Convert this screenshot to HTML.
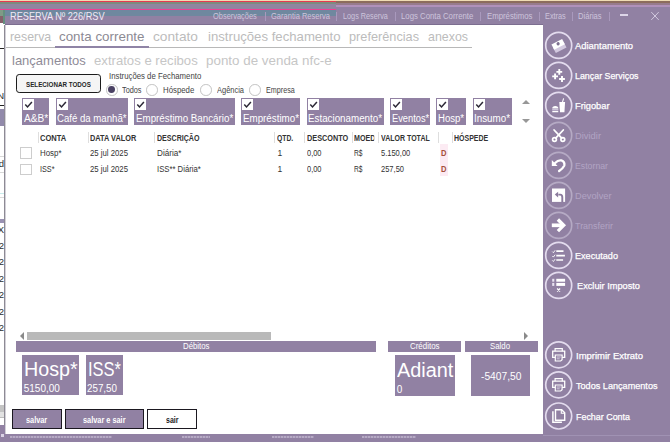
<!DOCTYPE html>
<html>
<head>
<meta charset="utf-8">
<title>Reserva</title>
<style>
*{box-sizing:border-box;margin:0;padding:0}
html,body{width:670px;height:442px;overflow:hidden;background:#fff}
body{position:relative;font-family:"Liberation Sans",sans-serif;color:#333}
.a{position:absolute}
.t{position:absolute;white-space:nowrap;transform-origin:0 0}
svg{position:absolute;overflow:visible}
</style>
</head>
<body>
<div class="a" style="left:0px;top:0px;width:670px;height:1px;background:#efdcb4;"></div>
<div class="a" style="left:0px;top:1px;width:336px;height:1px;background:#e63950;"></div>
<div class="a" style="left:336px;top:1px;width:334px;height:2px;background:#8c6c5c;"></div>
<div class="a" style="left:0px;top:2px;width:336px;height:2px;background:#7d8b7f;"></div>
<div class="a" style="left:0px;top:4px;width:336px;height:5px;background:#8f86a0;"></div>
<div class="a" style="left:336px;top:3px;width:334px;height:2px;background:#977b8c;"></div>
<div class="a" style="left:336px;top:5px;width:334px;height:2.4px;background:#b091ba;"></div>
<div class="a" style="left:336px;top:7px;width:334px;height:3px;background:#9181a3;"></div>
<div class="a" style="left:0px;top:9px;width:336px;height:1px;background:#ee3f93;"></div>
<div class="a" style="left:5px;top:10px;width:665px;height:14.5px;background:#9181a3;"></div>
<div class="a" style="left:0px;top:10px;width:336px;height:6px;background:#6f889f;"></div>
<div class="a" style="left:0px;top:10px;width:5px;height:6px;background:#7f9a86;"></div>
<div class="a" style="left:0px;top:16px;width:5px;height:7px;background:#85606a;"></div>
<div class="a" style="left:0px;top:22.5px;width:5px;height:2.5px;background:#fff;"></div>
<div class="a" style="left:3px;top:10px;width:1.5px;height:14px;background:#64907f;"></div>
<div class="a" style="left:542.6px;top:24px;width:127.4px;height:418px;background:#9181a3;"></div>
<div class="a" style="left:0px;top:434.3px;width:670px;height:7.7px;background:#9181a3;"></div>
<div class="a" style="left:0px;top:25px;width:6px;height:409.3px;background:#fff;"></div>
<div class="a" style="left:4px;top:25px;width:1px;height:409.3px;background:#8d8a94;"></div>
<div class="a" style="left:5px;top:25px;width:1px;height:409.3px;background:#d3d1d8;"></div>
<div class="a" style="left:5px;top:23.5px;width:538px;height:1px;background:#7c6e90;"></div>
<div class="a" style="left:0px;top:48px;width:4px;height:1px;background:#222;"></div>
<div class="a" style="left:265px;top:12px;width:1px;height:9px;background:#a999bd;"></div>
<div class="a" style="left:336px;top:12px;width:1px;height:9px;background:#a999bd;"></div>
<div class="a" style="left:394.5px;top:12px;width:1px;height:9px;background:#a999bd;"></div>
<div class="a" style="left:480px;top:12px;width:1px;height:9px;background:#a999bd;"></div>
<div class="a" style="left:538.5px;top:12px;width:1px;height:9px;background:#a999bd;"></div>
<div class="a" style="left:572px;top:12px;width:1px;height:9px;background:#a999bd;"></div>
<div class="a" style="left:608.5px;top:12px;width:1px;height:9px;background:#a999bd;"></div>
<div class="a" style="left:620.4px;top:14.4px;width:7.2px;height:1.2px;background:#ddd5e8;"></div>
<svg style="left:650.6px;top:11.5px" width="8" height="8" viewBox="0 0 8 8"><path d="M0.3 0.1L7.7 7.9M7.7 0.1L0.3 7.9" stroke="#d9d1e5" stroke-width="0.9" fill="none"/></svg>
<div class="a" style="left:6px;top:47px;width:466px;height:1px;background:#b8b8b8;"></div>
<div class="a" style="left:55px;top:46px;width:94px;height:2px;background:#8f84a6;"></div>
<div class="a" style="left:15.9px;top:73.9px;width:85.4px;height:19.2px;border:1.9px solid #1c1c1c;border-radius:3.2px;background:#f5f5f5"></div>
<div class="a" style="left:106.0px;top:84.1px;width:11.5px;height:11.5px;border-radius:50%;border:1px solid #c2c2c2;background:#fff"></div>
<div class="a" style="left:108.35px;top:86.45px;width:6.8px;height:6.8px;border-radius:50%;background:#4b4264"></div>
<div class="a" style="left:146.25px;top:84.1px;width:11.5px;height:11.5px;border-radius:50%;border:1px solid #c2c2c2;background:#fff"></div>
<div class="a" style="left:200.25px;top:84.1px;width:11.5px;height:11.5px;border-radius:50%;border:1px solid #c2c2c2;background:#fff"></div>
<div class="a" style="left:249.0px;top:84.1px;width:11.5px;height:11.5px;border-radius:50%;border:1px solid #c2c2c2;background:#fff"></div>
<div class="a" style="left:22px;top:98px;width:27.200000000000003px;height:26.6px;background:#9181a3;"></div>
<div class="a" style="left:23px;top:99.25px;width:11px;height:11px;background:#fff;"></div>
<svg style="left:23px;top:99.25px" width="11" height="11" viewBox="0 0 11 11"><path d="M2.3 5.6L4.5 7.9L8.9 2.9" stroke="#2b2735" stroke-width="1.5" fill="none"/></svg>
<div class="a" style="left:55.5px;top:98px;width:72.4px;height:26.6px;background:#9181a3;"></div>
<div class="a" style="left:56.5px;top:99.25px;width:11px;height:11px;background:#fff;"></div>
<svg style="left:56.5px;top:99.25px" width="11" height="11" viewBox="0 0 11 11"><path d="M2.3 5.6L4.5 7.9L8.9 2.9" stroke="#2b2735" stroke-width="1.5" fill="none"/></svg>
<div class="a" style="left:134.2px;top:98px;width:100.70000000000002px;height:26.6px;background:#9181a3;"></div>
<div class="a" style="left:135.2px;top:99.25px;width:11px;height:11px;background:#fff;"></div>
<svg style="left:135.2px;top:99.25px" width="11" height="11" viewBox="0 0 11 11"><path d="M2.3 5.6L4.5 7.9L8.9 2.9" stroke="#2b2735" stroke-width="1.5" fill="none"/></svg>
<div class="a" style="left:241.2px;top:98px;width:58.80000000000001px;height:26.6px;background:#9181a3;"></div>
<div class="a" style="left:242.2px;top:99.25px;width:11px;height:11px;background:#fff;"></div>
<svg style="left:242.2px;top:99.25px" width="11" height="11" viewBox="0 0 11 11"><path d="M2.3 5.6L4.5 7.9L8.9 2.9" stroke="#2b2735" stroke-width="1.5" fill="none"/></svg>
<div class="a" style="left:306.6px;top:98px;width:77.39999999999998px;height:26.6px;background:#9181a3;"></div>
<div class="a" style="left:307.6px;top:99.25px;width:11px;height:11px;background:#fff;"></div>
<svg style="left:307.6px;top:99.25px" width="11" height="11" viewBox="0 0 11 11"><path d="M2.3 5.6L4.5 7.9L8.9 2.9" stroke="#2b2735" stroke-width="1.5" fill="none"/></svg>
<div class="a" style="left:390px;top:98px;width:40.30000000000001px;height:26.6px;background:#9181a3;"></div>
<div class="a" style="left:391px;top:99.25px;width:11px;height:11px;background:#fff;"></div>
<svg style="left:391px;top:99.25px" width="11" height="11" viewBox="0 0 11 11"><path d="M2.3 5.6L4.5 7.9L8.9 2.9" stroke="#2b2735" stroke-width="1.5" fill="none"/></svg>
<div class="a" style="left:436.4px;top:98px;width:29.600000000000023px;height:26.6px;background:#9181a3;"></div>
<div class="a" style="left:437.4px;top:99.25px;width:11px;height:11px;background:#fff;"></div>
<svg style="left:437.4px;top:99.25px" width="11" height="11" viewBox="0 0 11 11"><path d="M2.3 5.6L4.5 7.9L8.9 2.9" stroke="#2b2735" stroke-width="1.5" fill="none"/></svg>
<div class="a" style="left:472.7px;top:98px;width:39.30000000000001px;height:26.6px;background:#9181a3;"></div>
<div class="a" style="left:473.7px;top:99.25px;width:11px;height:11px;background:#fff;"></div>
<svg style="left:473.7px;top:99.25px" width="11" height="11" viewBox="0 0 11 11"><path d="M2.3 5.6L4.5 7.9L8.9 2.9" stroke="#2b2735" stroke-width="1.5" fill="none"/></svg>
<svg style="left:522px;top:100px" width="8" height="4" viewBox="0 0 8 4"><path d="M0 4L4 0L8 4Z" fill="#979797"/></svg>
<svg style="left:522px;top:118.5px" width="8" height="4" viewBox="0 0 8 4"><path d="M0 0L4 4L8 0Z" fill="#979797"/></svg>
<div class="a" style="left:38px;top:131.5px;width:1px;height:11.5px;background:#dedede;"></div>
<div class="a" style="left:87.5px;top:131.5px;width:1px;height:11.5px;background:#dedede;"></div>
<div class="a" style="left:153.75px;top:131.5px;width:1px;height:11.5px;background:#dedede;"></div>
<div class="a" style="left:274.25px;top:131.5px;width:1px;height:11.5px;background:#dedede;"></div>
<div class="a" style="left:304.25px;top:131.5px;width:1px;height:11.5px;background:#dedede;"></div>
<div class="a" style="left:352.25px;top:131.5px;width:1px;height:11.5px;background:#dedede;"></div>
<div class="a" style="left:378px;top:131.5px;width:1px;height:11.5px;background:#dedede;"></div>
<div class="a" style="left:438px;top:131.5px;width:1px;height:11.5px;background:#dedede;"></div>
<div class="a" style="left:451.5px;top:131.5px;width:1px;height:11.5px;background:#dedede;"></div>
<div class="a" style="left:439.6px;top:143.6px;width:8.6px;height:32.2px;background:#fcebf3;"></div>
<div class="a" style="left:20px;top:147px;width:12px;height:11.75px;border:1px solid #cdcdcd;background:#fff"></div>
<div class="a" style="left:20px;top:163.5px;width:12px;height:11.75px;border:1px solid #cdcdcd;background:#fff"></div>
<div class="a" style="left:27px;top:332px;width:244px;height:7.5px;background:#b9b9b9;"></div>
<svg style="left:20px;top:332px" width="4" height="8" viewBox="0 0 4 8"><path d="M4 0L0 4L4 8Z" fill="#8a8a8a"/></svg>
<svg style="left:524px;top:332px" width="4" height="8" viewBox="0 0 4 8"><path d="M0 0L4 4L0 8Z" fill="#8a8a8a"/></svg>
<div class="a" style="left:16.25px;top:341px;width:359.75px;height:11px;background:#9181a3;"></div>
<div class="a" style="left:388.3px;top:341px;width:73.1px;height:11px;background:#9181a3;"></div>
<div class="a" style="left:465.25px;top:341px;width:72.75px;height:11px;background:#9181a3;"></div>
<div class="a" style="left:22px;top:354.8px;width:56.75px;height:40.2px;background:#9181a3;"></div>
<div class="a" style="left:85.5px;top:354.8px;width:37px;height:40.2px;background:#9181a3;"></div>
<div class="a" style="left:395.2px;top:355.4px;width:59.9px;height:41px;background:#9181a3;"></div>
<div class="a" style="left:470.5px;top:355.4px;width:59.8px;height:41px;background:#9181a3;"></div>
<div class="a" style="left:11.75px;top:409.25px;width:50.25px;height:19.5px;border:1.7px solid #1b1820;background:#9181a3"></div>
<div class="a" style="left:65px;top:409.25px;width:78.75px;height:19.5px;border:1.7px solid #1b1820;background:#9181a3"></div>
<div class="a" style="left:147.25px;top:409.25px;width:50.0px;height:19.5px;border:1.7px solid #1b1820;background:#fff"></div>
<div class="a" style="left:543px;top:434.8px;width:127px;height:1px;background:#a092b3;"></div>
<div class="a" style="left:10px;top:436px;width:102px;height:1.5px;background:repeating-linear-gradient(90deg,#e4dced 0 2px,#b5a8c6 2px 3px);opacity:.45"></div>
<div class="a" style="left:182px;top:436px;width:28px;height:1.5px;background:repeating-linear-gradient(90deg,#e4dced 0 2px,#b5a8c6 2px 3px);opacity:.45"></div>
<div class="a" style="left:272px;top:436px;width:42px;height:1.5px;background:repeating-linear-gradient(90deg,#e4dced 0 2px,#b5a8c6 2px 3px);opacity:.45"></div>
<div class="a" style="left:362px;top:436px;width:54px;height:1.5px;background:repeating-linear-gradient(90deg,#e4dced 0 2px,#b5a8c6 2px 3px);opacity:.45"></div>
<svg style="left:0;top:0" width="670" height="442"><circle cx="558.7" cy="45.4" r="13.0" fill="none" stroke="#e3dbee" stroke-width="1.65" opacity="1.0"/></svg>
<svg style="left:0;top:0" width="670" height="442"><circle cx="558.7" cy="75.4" r="13.0" fill="none" stroke="#e3dbee" stroke-width="1.65" opacity="1.0"/></svg>
<svg style="left:0;top:0" width="670" height="442"><circle cx="558.7" cy="105.4" r="13.0" fill="none" stroke="#e3dbee" stroke-width="1.65" opacity="1.0"/></svg>
<svg style="left:0;top:0" width="670" height="442"><circle cx="558.7" cy="135.4" r="13.0" fill="none" stroke="#e3dbee" stroke-width="1.65" opacity="0.45"/></svg>
<svg style="left:0;top:0" width="670" height="442"><circle cx="558.7" cy="165.4" r="13.0" fill="none" stroke="#e3dbee" stroke-width="1.65" opacity="0.45"/></svg>
<svg style="left:0;top:0" width="670" height="442"><circle cx="558.7" cy="195.4" r="13.0" fill="none" stroke="#e3dbee" stroke-width="1.65" opacity="0.45"/></svg>
<svg style="left:0;top:0" width="670" height="442"><circle cx="558.7" cy="225.4" r="13.0" fill="none" stroke="#e3dbee" stroke-width="1.65" opacity="0.45"/></svg>
<svg style="left:0;top:0" width="670" height="442"><circle cx="558.7" cy="255.4" r="13.0" fill="none" stroke="#e3dbee" stroke-width="1.65" opacity="1.0"/></svg>
<svg style="left:0;top:0" width="670" height="442"><circle cx="558.7" cy="285.4" r="13.0" fill="none" stroke="#e3dbee" stroke-width="1.65" opacity="1.0"/></svg>
<svg style="left:0;top:0" width="670" height="442"><circle cx="558.7" cy="354.8" r="13.0" fill="none" stroke="#e3dbee" stroke-width="1.65" opacity="1.0"/></svg>
<svg style="left:0;top:0" width="670" height="442"><circle cx="558.7" cy="384.8" r="13.0" fill="none" stroke="#e3dbee" stroke-width="1.65" opacity="1.0"/></svg>
<svg style="left:0;top:0" width="670" height="442"><circle cx="558.7" cy="416.0" r="13.0" fill="none" stroke="#e3dbee" stroke-width="1.65" opacity="1.0"/></svg>
<svg style="left:0;top:0" width="670" height="442"><g transform="translate(558.7 45.4)" opacity="1.0"><g transform="rotate(-27)"><rect x="-6" y="-0.8" width="12" height="6.2" fill="#d3c9e0"/><rect x="-6" y="-4.2" width="12" height="6" fill="#fff"/><circle cx="0.2" cy="-1.7" r="1.6" fill="#7d7090"/></g></g></svg>
<svg style="left:0;top:0" width="670" height="442"><g transform="translate(558.7 75.4)" opacity="1.0"><path d="M-2.3 -3.5H3.5M0.6 -6.4V-0.6000000000000001" stroke="#fff" stroke-width="1.9" fill="none"/><path d="M-6.5 1.0H-0.7000000000000002M-3.6 -1.9V3.9" stroke="#fff" stroke-width="1.9" fill="none"/><path d="M0.3999999999999999 3.6H6.199999999999999M3.3 0.7000000000000002V6.5" stroke="#fff" stroke-width="1.9" fill="none"/></g></svg>
<svg style="left:0;top:0" width="670" height="442"><g transform="translate(558.7 105.4)" opacity="1.0"><path d="M-6.5 3.2Q-6.5 0.6 -3.4 0.6Q-0.3 0.6 -0.3 3.2Z" fill="#fff"/><rect x="-6.5" y="3.8" width="6.2" height="1.2" fill="#ddd5e8"/><rect x="-6.5" y="5.5" width="6.2" height="1.3" rx="0.5" fill="#fff"/><path d="M0.6 -3.4H6.4L5.7 6.8H1.3Z" fill="#fff"/><path d="M3.8 -3.2L4.9 -7" stroke="#fff" stroke-width="1.1" fill="none"/></g></svg>
<svg style="left:0;top:0" width="670" height="442"><g transform="translate(558.7 135.4)" opacity="1.0"><path d="M-4.6 -5.4L3.0 2.8M4.6 -5.4L-3.0 2.8" stroke="#fff" stroke-width="1.8" fill="none" stroke-linecap="round"/><circle cx="-4.2" cy="4.1" r="1.9" fill="none" stroke="#fff" stroke-width="1.7"/><circle cx="4.1" cy="4.1" r="1.9" fill="none" stroke="#fff" stroke-width="1.7"/></g></svg>
<svg style="left:0;top:0" width="670" height="442"><g transform="translate(558.7 165.4)" opacity="1.0"><path d="M-6.9 -5.4V0.6H-1.1Z" fill="#fff"/><path d="M-3.6 -2.4Q-0.6 -5.6 2.6 -5.0Q6.4 -3.8 5.6 0.2Q4.6 2.6 0.4 5.6" stroke="#fff" stroke-width="2.3" fill="none" stroke-linecap="round"/></g></svg>
<svg style="left:0;top:0" width="670" height="442"><g transform="translate(558.7 195.4)" opacity="1.0"><rect x="-6.7" y="-6.9" width="13.1" height="13.4" fill="#fff"/><path d="M-0.4 -0.8H1.6Q3.6 -0.8 3.6 2V6.5" stroke="#8b7b9d" stroke-width="1.9" fill="none"/><path d="M-3.9 -0.8L-0.6 -3.6V2Z" fill="#8b7b9d"/></g></svg>
<svg style="left:0;top:0" width="670" height="442"><g transform="translate(558.7 225.4)" opacity="1.0"><path d="M-6.9 -0.1H4.2" stroke="#fff" stroke-width="3.7" fill="none"/><path d="M-0.8 -5.9L5.0 -0.1L-0.8 5.7" stroke="#fff" stroke-width="3.3" fill="none" stroke-linejoin="miter"/></g></svg>
<svg style="left:0;top:0" width="670" height="442"><g transform="translate(558.7 255.4)" opacity="1.0"><path d="M-2.4 -4.2H4.8M-2.4 0.2H6.2M-2.4 4.6H4.4" stroke="#fff" stroke-width="1.7" fill="none"/><path d="M-6.4 -3.8L-5.3 -2.6999999999999997L-3.6 -5.1" stroke="#fff" stroke-width="0.9" fill="none"/><path d="M-6.4 0.6L-5.3 1.7000000000000002L-3.6 -0.7000000000000001" stroke="#fff" stroke-width="0.9" fill="none"/><path d="M-6.4 5.0L-5.3 6.1L-3.6 3.7" stroke="#fff" stroke-width="0.9" fill="none"/></g></svg>
<svg style="left:0;top:0" width="670" height="442"><g transform="translate(558.7 285.4)" opacity="1.0"><rect x="-6.5" y="-6.6" width="2.1" height="2.9" fill="#e9e3f1"/><rect x="-2.4" y="-6.6" width="8.8" height="2.9" fill="#fff"/><rect x="-6.5" y="-2.5" width="2.1" height="3" fill="#e9e3f1"/><rect x="-2.4" y="-2.5" width="8.8" height="3" fill="#fff"/><path d="M-1.6 3.1L1.4 6.1M1.4 3.1L-1.6 6.1" stroke="#fff" stroke-width="1.2" fill="none"/></g></svg>
<svg style="left:0;top:0" width="670" height="442"><g transform="translate(558.7 354.8)" opacity="1.0"><path d="M-3.6 -3.6V-6.2H3.6V-3.6" stroke="#fff" stroke-width="1.2" fill="none"/><path d="M-3.4 2.6H-6V-3.6H6V2.6H3.4" stroke="#fff" stroke-width="1.3" fill="none"/><path d="M-3.4 0.2H3.4V5L2 6.2H-3.4Z" stroke="#fff" stroke-width="1.2" fill="none"/><path d="M-2 2.2H2M-2 4H1" stroke="#e6dff0" stroke-width="0.8" fill="none"/></g></svg>
<svg style="left:0;top:0" width="670" height="442"><g transform="translate(558.7 384.8)" opacity="1.0"><path d="M-3.6 -3.6V-6.2H3.6V-3.6" stroke="#fff" stroke-width="1.2" fill="none"/><path d="M-3.4 2.6H-6V-3.6H6V2.6H3.4" stroke="#fff" stroke-width="1.3" fill="none"/><path d="M-3.4 0.2H3.4V5L2 6.2H-3.4Z" stroke="#fff" stroke-width="1.2" fill="none"/><path d="M-2 2.2H2M-2 4H1" stroke="#e6dff0" stroke-width="0.8" fill="none"/></g></svg>
<svg style="left:0;top:0" width="670" height="442"><g transform="translate(558.7 416.0)" opacity="1.0"><path d="M-3.2 -6.2H3L6 -3.2V4.2H-3.2Z" stroke="#fff" stroke-width="1.4" fill="none" stroke-linejoin="miter"/><path d="M2.6 -6V-2.8H5.8" stroke="#fff" stroke-width="1.1" fill="none"/><path d="M-5.8 -4.8V6.2H3.2" stroke="#fff" stroke-width="1.5" fill="none"/></g></svg>
<div class="a" style="left:0px;top:105px;width:4px;height:1px;background:#222;"></div>
<div class="a" style="left:0px;top:109px;width:4px;height:17px;background:#9189aa;"></div>
<div class="a" style="left:0px;top:156px;width:4px;height:1px;background:#d8d8d8;"></div>
<div class="a" style="left:0px;top:172px;width:4px;height:1px;background:#d8d8d8;"></div>
<div class="a" style="left:0px;top:193px;width:4px;height:1px;background:#c9ecec;"></div>
<div class="a" style="left:0px;top:197px;width:4px;height:1px;background:#d9d9d9;"></div>
<div class="a" style="left:0px;top:219px;width:4px;height:4px;background:#9a92b3;"></div>
<div class="a" style="left:0px;top:405px;width:4px;height:7px;background:#c4c4c4;"></div>
<div class="a" style="left:0px;top:412px;width:4px;height:5px;background:#e2e2e2;"></div>
<div class="a" style="left:0px;top:417px;width:4px;height:1px;background:#bdbdbd;"></div>
<div class="a" style="left:0px;top:425px;width:5px;height:10px;background:#9181a3;"></div>
<div class="a" style="left:0.5px;top:433.5px;width:3px;height:3.5px;background:#d9d2e4;"></div>
<div class="a" style="left:0;top:91px;width:4px;height:10px;overflow:hidden"><div class="a" style="right:0;top:0;font-size:9.5px;line-height:10px;color:#2e2e2e;white-space:nowrap">/N</div></div>
<div class="a" style="left:0;top:159px;width:4px;height:10px;overflow:hidden"><div class="a" style="right:0;top:0;font-size:9.5px;line-height:10px;color:#2e2e2e;white-space:nowrap">ad</div></div>
<div class="a" style="left:0;top:225px;width:4px;height:10px;overflow:hidden"><div class="a" style="right:0;top:0;font-size:9.5px;line-height:10px;color:#2e2e2e;white-space:nowrap">X</div></div>
<div class="a" style="left:0;top:240.5px;width:4px;height:10px;overflow:hidden"><div class="a" style="right:0;top:0;font-size:9.5px;line-height:10px;color:#2e2e2e;white-space:nowrap">2</div></div>
<div class="a" style="left:0;top:257px;width:4px;height:10px;overflow:hidden"><div class="a" style="right:0;top:0;font-size:9.5px;line-height:10px;color:#2e2e2e;white-space:nowrap">2</div></div>
<div class="a" style="left:0;top:273.5px;width:4px;height:10px;overflow:hidden"><div class="a" style="right:0;top:0;font-size:9.5px;line-height:10px;color:#2e2e2e;white-space:nowrap">2</div></div>
<div class="a" style="left:0;top:290px;width:4px;height:10px;overflow:hidden"><div class="a" style="right:0;top:0;font-size:9.5px;line-height:10px;color:#2e2e2e;white-space:nowrap">2</div></div>
<div class="a" style="left:0;top:306.5px;width:4px;height:10px;overflow:hidden"><div class="a" style="right:0;top:0;font-size:9.5px;line-height:10px;color:#2e2e2e;white-space:nowrap">2</div></div>
<div class="a" style="left:0;top:323px;width:4px;height:10px;overflow:hidden"><div class="a" style="right:0;top:0;font-size:9.5px;line-height:10px;color:#2e2e2e;white-space:nowrap">2</div></div>
<div class="t" style="left:10.20px;top:11.19px;font-size:11px;line-height:11px;color:#efe9f6;transform:scaleX(0.8367);">RESERVA Nº 226/RSV</div>
<div class="t" style="left:213.40px;top:11.78px;font-size:9px;line-height:9px;color:#cdc4dc;transform:scaleX(0.8259);">Observações</div>
<div class="t" style="left:270.80px;top:11.78px;font-size:9px;line-height:9px;color:#cdc4dc;transform:scaleX(0.8349);">Garantia Reserva</div>
<div class="t" style="left:343.10px;top:11.78px;font-size:9px;line-height:9px;color:#cdc4dc;transform:scaleX(0.8086);">Logs Reserva</div>
<div class="t" style="left:401.00px;top:11.78px;font-size:9px;line-height:9px;color:#cdc4dc;transform:scaleX(0.8652);">Logs Conta Corrente</div>
<div class="t" style="left:486.60px;top:11.78px;font-size:9px;line-height:9px;color:#cdc4dc;transform:scaleX(0.8645);">Empréstimos</div>
<div class="t" style="left:544.70px;top:11.78px;font-size:9px;line-height:9px;color:#cdc4dc;transform:scaleX(0.8152);">Extras</div>
<div class="t" style="left:578.40px;top:11.78px;font-size:9px;line-height:9px;color:#cdc4dc;transform:scaleX(0.8424);">Diárias</div>
<div class="t" style="left:9.50px;top:30.07px;font-size:13.5px;line-height:13.5px;color:#bcbcbc;transform:scaleX(0.9163);">reserva</div>
<div class="t" style="left:59.00px;top:30.07px;font-size:13.5px;line-height:13.5px;color:#8c8a93;transform:scaleX(0.9906);">conta corrente</div>
<div class="t" style="left:153.00px;top:30.07px;font-size:13.5px;line-height:13.5px;color:#bcbcbc;transform:scaleX(1.0159);">contato</div>
<div class="t" style="left:207.50px;top:30.07px;font-size:13.5px;line-height:13.5px;color:#bcbcbc;transform:scaleX(0.9755);">instruções fechamento</div>
<div class="t" style="left:349.00px;top:30.07px;font-size:13.5px;line-height:13.5px;color:#bcbcbc;transform:scaleX(0.9422);">preferências</div>
<div class="t" style="left:428.00px;top:30.07px;font-size:13.5px;line-height:13.5px;color:#bcbcbc;transform:scaleX(0.9186);">anexos</div>
<div class="t" style="left:11.75px;top:54.07px;font-size:13.5px;line-height:13.5px;color:#8f8c98;transform:scaleX(0.9635);">lançamentos</div>
<div class="t" style="left:93.75px;top:54.07px;font-size:13.5px;line-height:13.5px;color:#c6c6c6;transform:scaleX(0.9736);">extratos e recibos</div>
<div class="t" style="left:206.00px;top:54.07px;font-size:13.5px;line-height:13.5px;color:#c6c6c6;transform:scaleX(0.9913);">ponto de venda nfc-e</div>
<div class="t" style="left:26.40px;top:80.97px;font-size:7.6px;line-height:7.6px;color:#262626;font-weight:bold;transform:scaleX(0.8227);">SELECIONAR TODOS</div>
<div class="t" style="left:109.00px;top:71.88px;font-size:9px;line-height:9px;color:#444;transform:scaleX(0.8657);">Instruções de Fechamento</div>
<div class="t" style="left:121.75px;top:85.68px;font-size:9px;line-height:9px;color:#444;transform:scaleX(0.8114);">Todos</div>
<div class="t" style="left:163.00px;top:85.68px;font-size:9px;line-height:9px;color:#444;transform:scaleX(0.8673);">Hóspede</div>
<div class="t" style="left:216.75px;top:85.68px;font-size:9px;line-height:9px;color:#444;transform:scaleX(0.8300);">Agência</div>
<div class="t" style="left:265.50px;top:85.68px;font-size:9px;line-height:9px;color:#444;transform:scaleX(0.7983);">Empresa</div>
<div class="t" style="left:23.60px;top:113.83px;font-size:10px;line-height:10px;color:#fff;transform:scaleX(1.0123);">A&amp;B*</div>
<div class="t" style="left:57.10px;top:113.83px;font-size:10px;line-height:10px;color:#fff;transform:scaleX(0.9615);">Café da manhã*</div>
<div class="t" style="left:135.80px;top:113.83px;font-size:10px;line-height:10px;color:#fff;transform:scaleX(0.9770);">Empréstimo Bancário*</div>
<div class="t" style="left:242.80px;top:113.83px;font-size:10px;line-height:10px;color:#fff;transform:scaleX(0.9782);">Empréstimo*</div>
<div class="t" style="left:308.20px;top:113.83px;font-size:10px;line-height:10px;color:#fff;transform:scaleX(0.9787);">Estacionamento*</div>
<div class="t" style="left:391.60px;top:113.83px;font-size:10px;line-height:10px;color:#fff;transform:scaleX(0.9293);">Eventos*</div>
<div class="t" style="left:438.00px;top:113.83px;font-size:10px;line-height:10px;color:#fff;transform:scaleX(0.9578);">Hosp*</div>
<div class="t" style="left:474.30px;top:113.83px;font-size:10px;line-height:10px;color:#fff;transform:scaleX(0.9813);">Insumo*</div>
<div class="t" style="left:40.00px;top:134.27px;font-size:8.3px;line-height:8.3px;color:#333;font-weight:bold;transform:scaleX(0.9086);">CONTA</div>
<div class="t" style="left:90.00px;top:134.27px;font-size:8.3px;line-height:8.3px;color:#333;font-weight:bold;transform:scaleX(0.8854);">DATA VALOR</div>
<div class="t" style="left:156.75px;top:134.27px;font-size:8.3px;line-height:8.3px;color:#333;font-weight:bold;transform:scaleX(0.8535);">DESCRIÇÃO</div>
<div class="t" style="left:276.75px;top:134.27px;font-size:8.3px;line-height:8.3px;color:#333;font-weight:bold;transform:scaleX(0.8195);">QTD.</div>
<div class="t" style="left:306.75px;top:134.27px;font-size:8.3px;line-height:8.3px;color:#333;font-weight:bold;transform:scaleX(0.8800);">DESCONTO</div>
<div class="t" style="left:354.00px;top:134.27px;font-size:8.3px;line-height:8.3px;color:#333;font-weight:bold;transform:scaleX(0.8579);clip-path:inset(0 23.5% 0 0);">MOEDA</div>
<div class="t" style="left:380.50px;top:134.27px;font-size:8.3px;line-height:8.3px;color:#333;font-weight:bold;transform:scaleX(0.8460);">VALOR TOTAL</div>
<div class="t" style="left:453.50px;top:134.27px;font-size:8.3px;line-height:8.3px;color:#333;font-weight:bold;transform:scaleX(0.8441);">HÓSPEDE</div>
<div class="t" style="left:90.00px;top:148.90px;font-size:8.5px;line-height:8.5px;color:#333;transform:scaleX(0.9136);">25 jul 2025</div>
<div class="t" style="left:277.50px;top:148.90px;font-size:8.5px;line-height:8.5px;color:#333;">1</div>
<div class="t" style="left:306.75px;top:148.90px;font-size:8.5px;line-height:8.5px;color:#333;transform:scaleX(0.8763);">0,00</div>
<div class="t" style="left:354.00px;top:148.90px;font-size:8.5px;line-height:8.5px;color:#333;transform:scaleX(0.7816);">R$</div>
<div class="t" style="left:440.50px;top:148.90px;font-size:8.5px;line-height:8.5px;color:#a6503a;font-weight:bold;transform:scaleX(0.8957);">D</div>
<div class="t" style="left:90.00px;top:165.30px;font-size:8.5px;line-height:8.5px;color:#333;transform:scaleX(0.9136);">25 jul 2025</div>
<div class="t" style="left:277.50px;top:165.30px;font-size:8.5px;line-height:8.5px;color:#333;">1</div>
<div class="t" style="left:306.75px;top:165.30px;font-size:8.5px;line-height:8.5px;color:#333;transform:scaleX(0.8763);">0,00</div>
<div class="t" style="left:354.00px;top:165.30px;font-size:8.5px;line-height:8.5px;color:#333;transform:scaleX(0.7816);">R$</div>
<div class="t" style="left:440.50px;top:165.30px;font-size:8.5px;line-height:8.5px;color:#a6503a;font-weight:bold;transform:scaleX(0.8957);">D</div>
<div class="t" style="left:40.00px;top:148.90px;font-size:8.5px;line-height:8.5px;color:#333;transform:scaleX(0.9285);">Hosp*</div>
<div class="t" style="left:40.00px;top:165.30px;font-size:8.5px;line-height:8.5px;color:#333;transform:scaleX(0.8522);">ISS*</div>
<div class="t" style="left:156.75px;top:148.90px;font-size:8.5px;line-height:8.5px;color:#333;transform:scaleX(0.9602);">Diária*</div>
<div class="t" style="left:156.75px;top:165.30px;font-size:8.5px;line-height:8.5px;color:#333;transform:scaleX(0.9079);">ISS** Diária*</div>
<div class="t" style="left:380.50px;top:148.90px;font-size:8.5px;line-height:8.5px;color:#333;transform:scaleX(0.8839);">5.150,00</div>
<div class="t" style="left:380.50px;top:165.30px;font-size:8.5px;line-height:8.5px;color:#333;transform:scaleX(0.8846);">257,50</div>
<div class="t" style="left:182.50px;top:341.68px;font-size:9px;line-height:9px;color:#fff;transform:scaleX(0.8684);">Débitos</div>
<div class="t" style="left:410.25px;top:341.68px;font-size:9px;line-height:9px;color:#fff;transform:scaleX(0.8802);">Créditos</div>
<div class="t" style="left:489.75px;top:341.68px;font-size:9px;line-height:9px;color:#fff;transform:scaleX(0.8684);">Saldo</div>
<div class="t" style="left:23.75px;top:359.37px;font-size:20px;line-height:20px;color:#fff;transform:scaleX(0.9865);">Hosp*</div>
<div class="t" style="left:23.75px;top:384.14px;font-size:10px;line-height:10px;color:#fff;">5150,00</div>
<div class="t" style="left:87.50px;top:359.37px;font-size:20px;line-height:20px;color:#fff;transform:scaleX(0.8244);">ISS*</div>
<div class="t" style="left:87.00px;top:384.14px;font-size:10px;line-height:10px;color:#fff;transform:scaleX(0.9806);">257,50</div>
<div class="t" style="left:397.25px;top:360.27px;font-size:20px;line-height:20px;color:#fff;transform:scaleX(0.9917);">Adiant</div>
<div class="t" style="left:396.75px;top:384.84px;font-size:10px;line-height:10px;color:#fff;">0</div>
<div class="t" style="left:480.50px;top:371.58px;font-size:10.3px;line-height:10.3px;color:#fff;transform:scaleX(0.9962);">-5407,50</div>
<div class="t" style="left:26.27px;top:416.66px;font-size:8.2px;line-height:8.2px;color:#fff;font-weight:bold;transform:scaleX(0.8950);">salvar</div>
<div class="t" style="left:83.12px;top:416.66px;font-size:8.2px;line-height:8.2px;color:#fff;font-weight:bold;transform:scaleX(0.8974);">salvar e sair</div>
<div class="t" style="left:166.00px;top:416.66px;font-size:8.2px;line-height:8.2px;color:#222;font-weight:bold;transform:scaleX(0.8574);">sair</div>
<div class="t" style="left:575.00px;top:41.37px;font-size:9.6px;line-height:9.6px;color:#fff;transform:scaleX(0.9797);-webkit-text-stroke:0.25px #fff;">Adiantamento</div>
<div class="t" style="left:575.00px;top:71.37px;font-size:9.6px;line-height:9.6px;color:#fff;transform:scaleX(0.9230);-webkit-text-stroke:0.25px #fff;">Lançar Serviços</div>
<div class="t" style="left:575.00px;top:101.37px;font-size:9.6px;line-height:9.6px;color:#fff;transform:scaleX(0.9655);-webkit-text-stroke:0.25px #fff;">Frigobar</div>
<div class="t" style="left:575.00px;top:131.37px;font-size:9.6px;line-height:9.6px;color:#b1a4c3;transform:scaleX(0.9754);">Dividir</div>
<div class="t" style="left:575.00px;top:161.37px;font-size:9.6px;line-height:9.6px;color:#b1a4c3;transform:scaleX(0.9100);">Estornar</div>
<div class="t" style="left:575.00px;top:191.37px;font-size:9.6px;line-height:9.6px;color:#b1a4c3;transform:scaleX(0.9641);">Devolver</div>
<div class="t" style="left:575.00px;top:221.37px;font-size:9.6px;line-height:9.6px;color:#b1a4c3;transform:scaleX(0.9336);">Transferir</div>
<div class="t" style="left:575.00px;top:251.37px;font-size:9.6px;line-height:9.6px;color:#fff;transform:scaleX(0.9483);-webkit-text-stroke:0.25px #fff;">Executado</div>
<div class="t" style="left:576.50px;top:281.37px;font-size:9.6px;line-height:9.6px;color:#fff;transform:scaleX(0.9607);-webkit-text-stroke:0.25px #fff;">Excluir Imposto</div>
<div class="t" style="left:575.50px;top:350.77px;font-size:9.6px;line-height:9.6px;color:#fff;transform:scaleX(0.9896);-webkit-text-stroke:0.25px #fff;">Imprimir Extrato</div>
<div class="t" style="left:575.50px;top:380.77px;font-size:9.6px;line-height:9.6px;color:#fff;transform:scaleX(0.9491);-webkit-text-stroke:0.25px #fff;">Todos Lançamentos</div>
<div class="t" style="left:575.50px;top:411.97px;font-size:9.6px;line-height:9.6px;color:#fff;transform:scaleX(0.9290);-webkit-text-stroke:0.25px #fff;">Fechar Conta</div>
</body>
</html>
